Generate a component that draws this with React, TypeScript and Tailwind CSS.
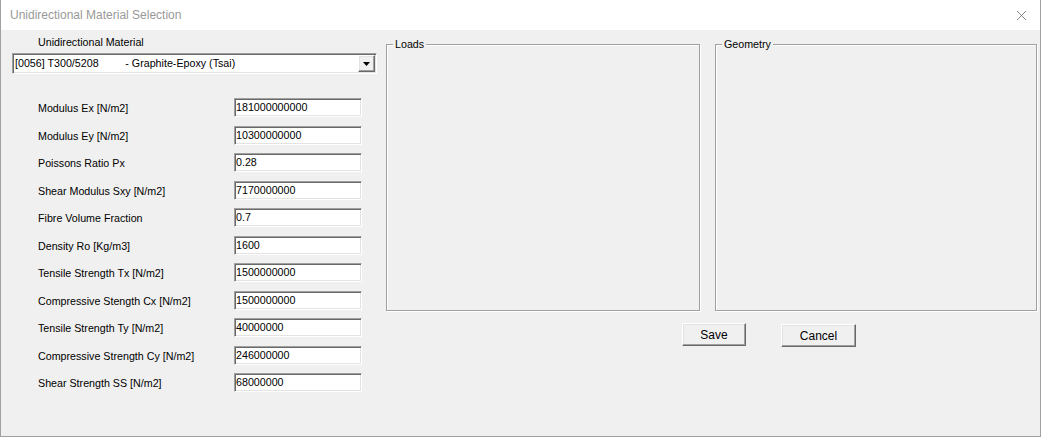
import { X } from "lucide-react";

const rows: [string, string][] = [
  ["Modulus Ex [N/m2]", "181000000000"],
  ["Modulus Ey [N/m2]", "10300000000"],
  ["Poissons Ratio Px", "0.28"],
  ["Shear Modulus Sxy [N/m2]", "7170000000"],
  ["Fibre Volume Fraction", "0.7"],
  ["Density Ro [Kg/m3]", "1600"],
  ["Tensile Strength Tx [N/m2]", "1500000000"],
  ["Compressive Stength Cx [N/m2]", "1500000000"],
  ["Tensile Strength Ty [N/m2]", "40000000"],
  ["Compressive Strength Cy [N/m2]", "246000000"],
  ["Shear Strength SS [N/m2]", "68000000"],
];

const sunken =
  "bg-white border border-t-[#a0a0a0] border-l-[#a0a0a0] border-b-white border-r-white shadow-[inset_1px_1px_0_#696969,inset_-1px_-1px_0_#e3e3e3]";
const raised =
  "bg-[#f0f0f0] border border-t-white border-l-white border-b-[#696969] border-r-[#696969] shadow-[inset_-1px_-1px_0_#a0a0a0,inset_1px_1px_0_#e3e3e3]";

function GroupBox({ title, className }: { title: string; className: string }) {
  return (
    <div
      className={
        "relative border border-[#a0a0a0] shadow-[inset_1px_1px_0_#fff,1px_1px_0_#fff] " + className
      }
    >
      <span className="absolute -top-[8px] left-[6px] bg-[#f0f0f0] px-[2px] leading-[14px]">{title}</span>
    </div>
  );
}

export default function App() {
  return (
    <div
      className="w-[1041px] h-[437px] flex flex-col border-l border-r border-b border-[#a0a0a0] bg-[#f0f0f0] text-[10.7px] text-black"
      style={{ fontFamily: '"Liberation Sans", Arial, sans-serif' }}
    >
      {/* title bar */}
      <div className="h-[30px] bg-white flex items-center justify-between pl-[9px] pr-[10px]">
        <span className="text-[12px] text-[#999999]">Unidirectional Material Selection</span>
        <X size={17} strokeWidth={1.1} className="text-[#666666]" />
      </div>

      <div className="flex flex-1">
        {/* left column */}
        <div className="w-[376px] pl-[11px]">
          <div className="mt-[5px] h-[14px] leading-[14px] pl-[26px]">Unidirectional Material</div>
          <div className={"mt-[4px] h-[21px] w-[365px] flex items-center " + sunken}>
            <span className="flex-1 pl-[2px] whitespace-pre">{"[0056] T300/5208         - Graphite-Epoxy (Tsai)"}</span>
            <div className={"w-[17px] h-[17px] mr-[1px] flex items-center justify-center " + raised}>
              <svg width="7" height="4" viewBox="0 0 7 4">
                <path d="M0 0H7L3.5 4Z" fill="#000" />
              </svg>
            </div>
          </div>

          <div className="mt-[24px] pl-[26px] flex flex-col gap-[8.5px]">
            {rows.map(([label, value]) => (
              <div key={label} className="flex items-center h-[19px]">
                <span className="w-[196px] pt-[2px]">{label}</span>
                <div className={"w-[128px] h-[19px] flex items-center pl-[1px] " + sunken}>{value}</div>
              </div>
            ))}
          </div>
        </div>

        {/* right column */}
        <div className="ml-[9px] pt-[14px] flex flex-col">
          <div className="flex">
            <GroupBox title="Loads" className="w-[314px] h-[267px]" />
            <GroupBox title="Geometry" className="ml-[15px] w-[322px] h-[267px]" />
          </div>
          <div className="flex mt-[12px]">
            <button className={"ml-[296px] w-[64px] h-[23px] text-[12px] " + raised}>Save</button>
            <button className={"ml-[35px] mt-[1px] w-[75px] h-[23px] text-[12px] " + raised}>Cancel</button>
          </div>
        </div>
      </div>
    </div>
  );
}
